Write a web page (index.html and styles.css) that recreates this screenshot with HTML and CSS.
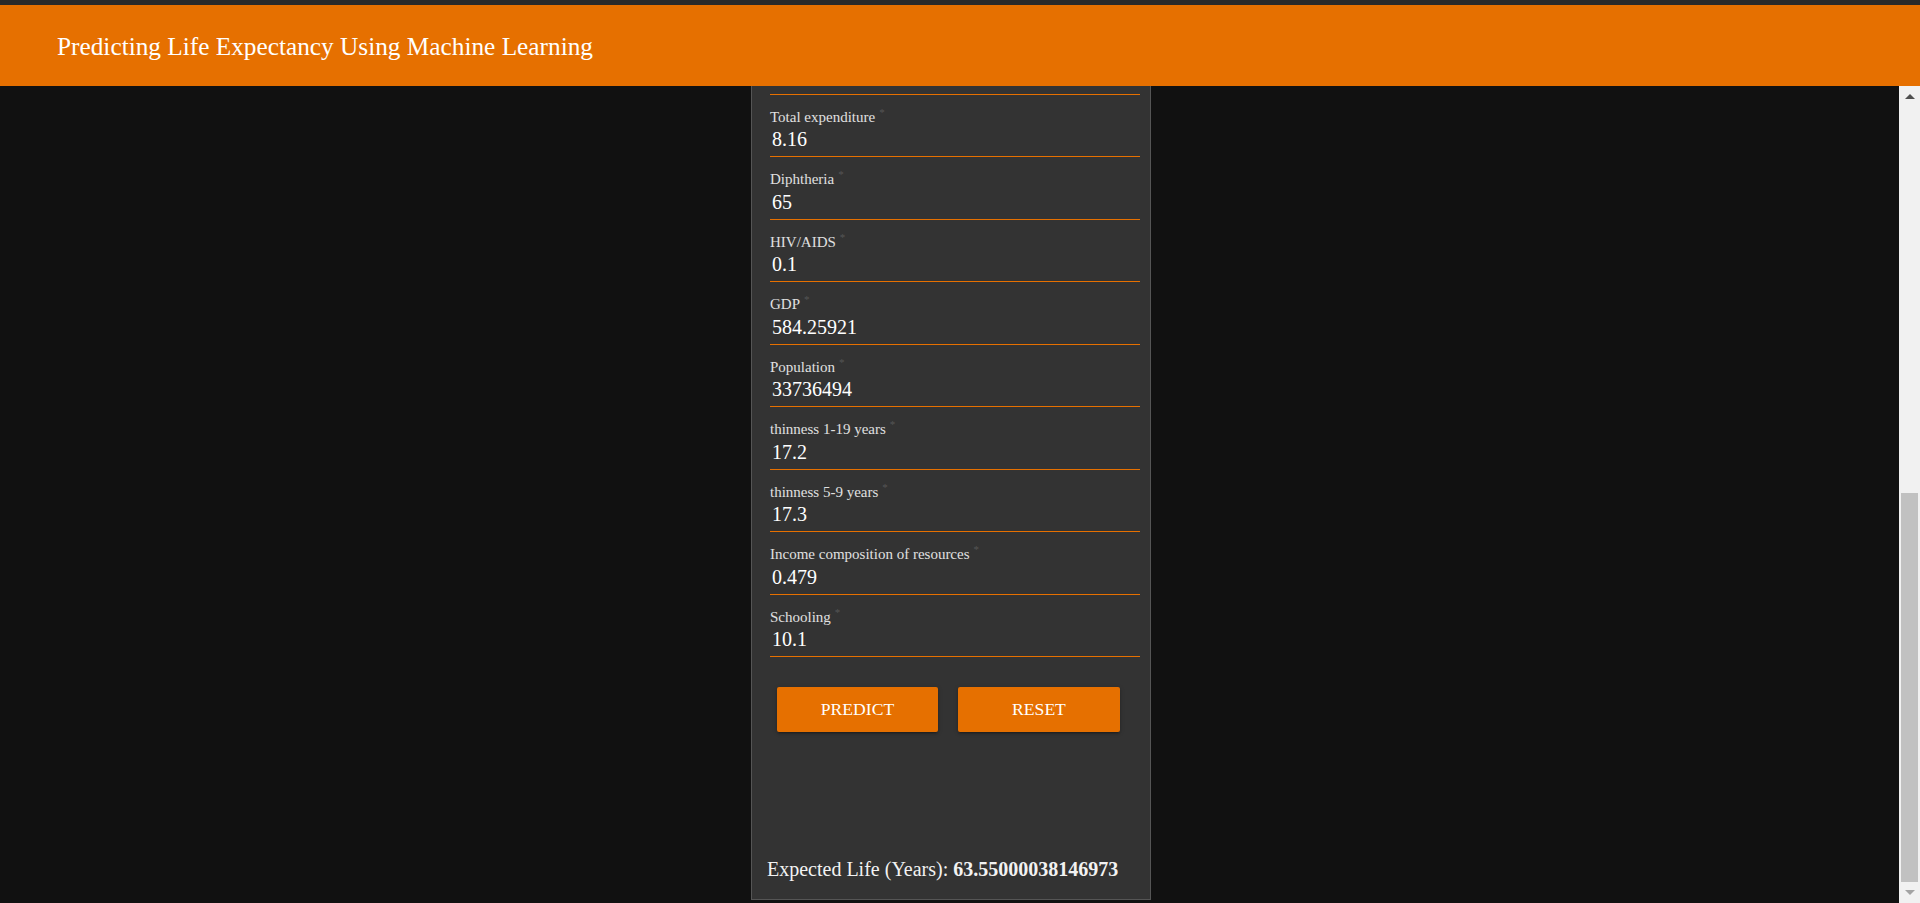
FILE: index.html
```html
<!DOCTYPE html>
<html lang="en">
<head>
<meta charset="utf-8">
<title>Predicting Life Expectancy Using Machine Learning</title>
<link rel="stylesheet" href="styles.css">
</head>
<body>
<header class="topbar">
  <h1 class="topbar-title">Predicting Life Expectancy Using Machine Learning</h1>
</header>
<div class="viewport">
  <main class="main">
    <div class="page">
      <form class="card">
        <div class="fields">
          <div class="field"><label class="field-label">Country<span class="req">*</span></label><input class="field-input" value="Afghanistan"></div>
          <div class="field"><label class="field-label">Year<span class="req">*</span></label><input class="field-input" value="2015"></div>
          <div class="field"><label class="field-label">Status<span class="req">*</span></label><input class="field-input" value="Developing"></div>
          <div class="field"><label class="field-label">Adult Mortality<span class="req">*</span></label><input class="field-input" value="263"></div>
          <div class="field"><label class="field-label">infant deaths<span class="req">*</span></label><input class="field-input" value="62"></div>
          <div class="field"><label class="field-label">Alcohol<span class="req">*</span></label><input class="field-input" value="0.01"></div>
          <div class="field"><label class="field-label">percentage expenditure<span class="req">*</span></label><input class="field-input" value="71.27962362"></div>
          <div class="field"><label class="field-label">Hepatitis B<span class="req">*</span></label><input class="field-input" value="65"></div>
          <div class="field"><label class="field-label">Measles<span class="req">*</span></label><input class="field-input" value="1154"></div>
          <div class="field"><label class="field-label">BMI<span class="req">*</span></label><input class="field-input" value="19.1"></div>
          <div class="field"><label class="field-label">under-five deaths<span class="req">*</span></label><input class="field-input" value="83"></div>
          <div class="field"><label class="field-label">Polio<span class="req">*</span></label><input class="field-input" value="6"></div>
          <div class="field"><label class="field-label">Total expenditure<span class="req">*</span></label><input class="field-input" value="8.16"></div>
          <div class="field"><label class="field-label">Diphtheria<span class="req">*</span></label><input class="field-input" value="65"></div>
          <div class="field"><label class="field-label">HIV/AIDS<span class="req">*</span></label><input class="field-input" value="0.1"></div>
          <div class="field"><label class="field-label">GDP<span class="req">*</span></label><input class="field-input" value="584.25921"></div>
          <div class="field"><label class="field-label">Population<span class="req">*</span></label><input class="field-input" value="33736494"></div>
          <div class="field"><label class="field-label">thinness 1-19 years<span class="req">*</span></label><input class="field-input" value="17.2"></div>
          <div class="field"><label class="field-label">thinness 5-9 years<span class="req">*</span></label><input class="field-input" value="17.3"></div>
          <div class="field"><label class="field-label">Income composition of resources<span class="req">*</span></label><input class="field-input" value="0.479"></div>
          <div class="field"><label class="field-label">Schooling<span class="req">*</span></label><input class="field-input" value="10.1"></div>
        </div>
        <div class="actions">
          <button type="button" class="btn btn-predict">Predict</button>
          <button type="reset" class="btn btn-reset">Reset</button>
        </div>
        <p class="result">Expected Life (Years): <b>63.55000038146973</b></p>
      </form>
    </div>
  </main>
  <div class="scrollbar" aria-hidden="true">
    <div class="sb-button">
      <svg width="10" height="5" viewBox="0 0 10 5"><polygon points="5,0 10,5 0,5" fill="#505050"/></svg>
    </div>
    <div class="sb-track">
      <div class="sb-thumb"></div>
    </div>
    <div class="sb-button">
      <svg width="10" height="5" viewBox="0 0 10 5"><polygon points="0,0 10,0 5,5" fill="#a3a3a3"/></svg>
    </div>
  </div>
</div>
</body>
</html>
```
FILE: styles.css
```css
* { box-sizing: border-box; }

html, body {
  margin: 0;
  height: 100%;
}

body {
  background: #111111;
  font-family: "Liberation Serif", "Times New Roman", serif;
  color: #ffffff;
  display: flex;
  flex-direction: column;
  overflow: hidden;
}

.topbar {
  flex: 0 0 86px;
  border-top: 5px solid #2a2a2a;
  background: #e67000;
  display: flex;
  align-items: center;
  padding-left: 57px;
}

.topbar-title {
  margin: 0;
  font-weight: normal;
  font-size: 25.3px;
  line-height: 28px;
  color: #ffffff;
}

.viewport {
  flex: 1 1 auto;
  min-height: 0;
  display: flex;
}

.main {
  flex: 1 1 auto;
  min-width: 0;
  overflow-y: auto;
  scrollbar-width: none;
  display: flex;
  flex-direction: column-reverse;
}

.main::-webkit-scrollbar {
  display: none;
}

.scrollbar {
  flex: 0 0 21px;
  background: #f1f1f1;
  display: flex;
  flex-direction: column;
}

.sb-button {
  flex: 0 0 21px;
  display: flex;
  align-items: center;
  justify-content: center;
}

.sb-track {
  flex: 1 1 auto;
  display: flex;
  flex-direction: column;
  justify-content: flex-end;
  padding: 0 2px 0 2px;
}

.sb-thumb {
  height: 389px;
  background: #c1c1c1;
}

.page {
  flex: 0 0 auto;
  padding: 38px 0 3px 3px;
}

.card {
  width: 400px;
  margin: 0 auto;
  background: #333333;
  border: 1px solid #555555;
  padding: 20px 10px 18px 15px;
}

.fields {
  margin-left: 3px;
}

.field {
  padding-top: 14px;
}

.field-label {
  display: block;
  font-size: 15px;
  line-height: 17px;
  color: #e0e0e0;
}

.req {
  font-size: 11px;
  vertical-align: super;
  line-height: 0;
  color: #555555;
  margin-left: 4px;
}

.field-input {
  display: block;
  width: 100%;
  height: 31.5px;
  padding: 0 0 2px 2px;
  margin: 0;
  border: none;
  border-bottom: 1px solid #e67000;
  background: transparent;
  color: #ffffff;
  font-family: "Liberation Serif", "Times New Roman", serif;
  font-size: 20px;
  outline: none;
}

.actions {
  display: flex;
  gap: 20px;
  margin-top: 30px;
  padding-left: 10px;
}

.btn {
  height: 45px;
  border: none;
  border-radius: 2px;
  background: #e67000;
  color: #ffffff;
  font-family: "Liberation Serif", "Times New Roman", serif;
  font-size: 17.6px;
  text-transform: uppercase;
  box-shadow: 0 2px 2px rgba(0, 0, 0, 0.14), 0 3px 1px -2px rgba(0, 0, 0, 0.12), 0 1px 5px rgba(0, 0, 0, 0.2);
  cursor: pointer;
}

.btn-predict { width: 161px; }
.btn-reset { width: 162px; }

.result {
  margin: 125px 0 0;
  font-size: 20px;
  line-height: 24px;
  color: #f2f2f2;
}
```
